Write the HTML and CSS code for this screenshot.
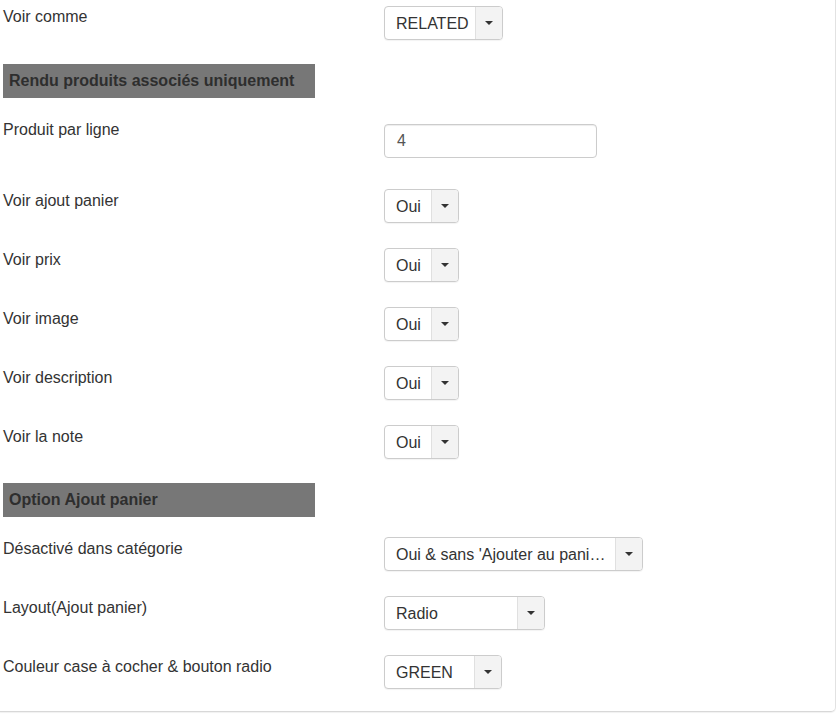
FILE: index.html
```html
<!DOCTYPE html>
<html lang="fr">
<head>
<meta charset="utf-8">
<title>Options</title>
<link rel="stylesheet" href="styles.css">
</head>
<body>
<div class="panel">
  <div class="row row-first">
    <div class="label">Voir comme</div>
    <div class="select w-related"><span class="val">RELATED</span><span class="caret-btn"><span class="caret"></span></span></div>
  </div>

  <div class="section">Rendu produits associés uniquement</div>

  <div class="row row-input">
    <div class="label">Produit par ligne</div>
    <div class="input">4</div>
  </div>

  <div class="row">
    <div class="label">Voir ajout panier</div>
    <div class="select w-oui"><span class="val">Oui</span><span class="caret-btn"><span class="caret"></span></span></div>
  </div>
  <div class="row">
    <div class="label">Voir prix</div>
    <div class="select w-oui"><span class="val">Oui</span><span class="caret-btn"><span class="caret"></span></span></div>
  </div>
  <div class="row">
    <div class="label">Voir image</div>
    <div class="select w-oui"><span class="val">Oui</span><span class="caret-btn"><span class="caret"></span></span></div>
  </div>
  <div class="row">
    <div class="label">Voir description</div>
    <div class="select w-oui"><span class="val">Oui</span><span class="caret-btn"><span class="caret"></span></span></div>
  </div>
  <div class="row row-before-section">
    <div class="label">Voir la note</div>
    <div class="select w-oui"><span class="val">Oui</span><span class="caret-btn"><span class="caret"></span></span></div>
  </div>

  <div class="section">Option Ajout panier</div>

  <div class="row">
    <div class="label">Désactivé dans catégorie</div>
    <div class="select w-desactive"><span class="val val-clip">Oui &amp; sans 'Ajouter au pani…</span><span class="caret-btn"><span class="caret"></span></span></div>
  </div>
  <div class="row">
    <div class="label">Layout(Ajout panier)</div>
    <div class="select w-radio"><span class="val">Radio</span><span class="caret-btn"><span class="caret"></span></span></div>
  </div>
  <div class="row row-last">
    <div class="label">Couleur case à cocher &amp; bouton radio</div>
    <div class="select w-green"><span class="val">GREEN</span><span class="caret-btn"><span class="caret"></span></span></div>
  </div>
</div>
</body>
</html>
```

FILE: styles.css
```css
* { box-sizing: border-box; }

html, body {
  margin: 0;
  padding: 0;
  background: #fff;
}

body {
  font-family: "Liberation Sans", Arial, sans-serif;
  font-size: 16px;
  color: #333;
  width: 836px;
  height: 715px;
  overflow: hidden;
}

.panel {
  width: 836px;
  padding: 6px 0 0 3px;
  border-bottom: 1px solid #d8d8d8;
  border-right: 1px solid #e2e2e2;
  border-bottom-right-radius: 5px;
  box-shadow: 0 1px 1px rgba(0, 0, 0, 0.06);
  display: flex;
  flex-direction: column;
}

.row {
  display: flex;
  align-items: flex-start;
  margin-bottom: 25px;
}

.row-first { margin-bottom: 24px; }
.row-first .label { padding-top: 1px; }
.row-before-section { margin-bottom: 24px; }
.row-last { margin-bottom: 22px; }

.row-input { margin-bottom: 31px; }
.row-input .input { margin-top: 6px; }

.label {
  width: 381px;
  line-height: 20px;
  padding-top: 2px;
  color: #333;
}

.section {
  width: 312px;
  height: 34px;
  background: #777;
  color: #2e2e2e;
  font-weight: bold;
  font-size: 16px;
  line-height: 34px;
  padding-left: 6px;
  margin-bottom: 20px;
}

.select {
  display: flex;
  height: 34px;
  border: 1px solid #ccc;
  border-radius: 4px;
  background: #fff;
  box-shadow: 0 1px 1px rgba(0, 0, 0, 0.05);
  overflow: hidden;
}

.select .val {
  flex: 1;
  min-width: 0;
  padding: 0 0 0 11px;
  line-height: 33px;
  color: #333;
  white-space: nowrap;
  overflow: hidden;
}

.select .val-clip {
  padding-right: 4px;
  text-overflow: ellipsis;
}

.caret-btn {
  width: 27px;
  flex: none;
  background: #f3f3f3;
  border-left: 1px solid #e0e0e0;
  display: flex;
  align-items: center;
  justify-content: center;
}

.caret {
  width: 0;
  height: 0;
  border-left: 4px solid transparent;
  border-right: 4px solid transparent;
  border-top: 4px solid #333;
}

.w-related { width: 119px; }
.w-oui { width: 75px; }
.w-desactive { width: 259px; }
.w-radio { width: 161px; }
.w-green { width: 118px; }

.input {
  width: 213px;
  height: 34px;
  border: 1px solid #ccc;
  border-radius: 4px;
  padding: 0 12px;
  line-height: 32px;
  color: #555;
  box-shadow: inset 0 1px 1px rgba(0, 0, 0, 0.075);
}
```
